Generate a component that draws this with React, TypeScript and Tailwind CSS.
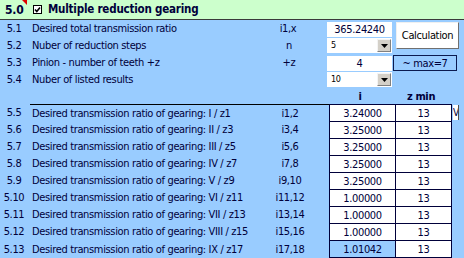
import React from "react";

const F = { fontFamily: '"DejaVu Sans Condensed", "DejaVu Sans", "Liberation Sans", sans-serif' };

function Dropdown({ value }: { value: string }) {
  return (
    <div className="w-[65px] h-[15px] bg-white flex items-center">
      <div className="flex-1 pl-[4px] text-[9px] leading-none text-black">{value}</div>
      <div className="w-[14px] h-[13px] mr-[1px] bg-[#d4d0c8] border-t border-l border-[#f4f4f4] border-r border-b border-r-[#808080] border-b-[#808080] flex items-center justify-center">
        <svg width="7" height="4" viewBox="0 0 7 4">
          <path d="M0 0H7L3.5 4Z" fill="#000" />
        </svg>
      </div>
    </div>
  );
}

const rows = [
  ["5.5", "I / z1", "i1,2", "3.24000"],
  ["5.6", "II / z3", "i3,4", "3.25000"],
  ["5.7", "III / z5", "i5,6", "3.25000"],
  ["5.8", "IV / z7", "i7,8", "3.25000"],
  ["5.9", "V / z9", "i9,10", "3.25000"],
  ["5.10", "VI / z11", "i11,12", "1.00000"],
  ["5.11", "VII / z13", "i13,14", "1.00000"],
  ["5.12", "VIII / z15", "i15,16", "1.00000"],
  ["5.13", "IX / z17", "i17,18", "1.01042"],
];

export default function App() {
  return (
    <div style={F} className="w-[464px] h-[258px] bg-[#99ccff] overflow-hidden text-[11px] tracking-[-0.35px] text-[#00003a] leading-none">
      {/* header */}
      <div className="h-[20px] bg-[#ccffcc] border-b border-[#3a3a3a] flex items-center">
        <div className="w-[28px] h-full relative flex items-center pl-[5px] font-bold text-[12px] tracking-[-0.2px]">
          5.0
          <div className="absolute top-0 right-[1px] w-0 h-0 border-l-[5px] border-l-transparent border-t-[5px] border-t-[#e00000]" />
        </div>
        <div className="w-[20px] flex items-center pl-[5px]">
          <svg width="9" height="9" viewBox="0 0 9 9">
            <rect x="0.5" y="0.5" width="8" height="8" fill="#fff" stroke="#000" />
            <path d="M2 4.5L3.8 6.5L7 2.5" stroke="#000" strokeWidth="1.6" fill="none" />
          </svg>
        </div>
        <div className="font-bold text-[11.5px] tracking-[-0.2px]">Multiple reduction gearing</div>
      </div>

      {/* top section */}
      <div className="grid grid-cols-[28px_227px_72px_66px_71px] grid-rows-[17px_17px_17px_17px]">
        <div className="flex items-center justify-center">5.1</div>
        <div className="flex items-center pl-[4px]">Desired total transmission ratio</div>
        <div className="flex items-center justify-center pr-[6px]">i1,x</div>
        <div className="flex items-center">
          <div className="w-[65px] h-[15px] mt-[1px] bg-white flex items-center justify-center">365.24240</div>
        </div>
        <div className="row-span-2 flex items-start pt-[2px] pl-[3px]">
          <div className="w-[63px] h-[27px] bg-white border border-t-[#f0f0f0] border-l-[#f0f0f0] border-r-[#707070] border-b-[#707070] flex items-center justify-center text-black">
            Calculation
          </div>
        </div>

        <div className="flex items-center justify-center">5.2</div>
        <div className="flex items-center pl-[4px]">Nuber of reduction steps</div>
        <div className="flex items-center justify-center pr-[4px]">n</div>
        <div className="flex items-center">
          <Dropdown value="5" />
        </div>

        <div className="flex items-center justify-center">5.3</div>
        <div className="flex items-center pl-[4px]">Pinion - number of teeth +z</div>
        <div className="flex items-center justify-center pr-[4px]">+z</div>
        <div className="flex items-center">
          <div className="w-[65px] h-[15px] mt-[1px] bg-white flex items-center justify-center">4</div>
        </div>
        <div className="flex items-center">
          <div className="w-[64px] h-[16px] mt-[1px] border border-[#0a1a50] flex items-center justify-center">~ max=7</div>
        </div>

        <div className="flex items-center justify-center">5.4</div>
        <div className="flex items-center pl-[4px]">Nuber of listed results</div>
        <div />
        <div className="flex items-center">
          <Dropdown value="10" />
        </div>
        <div />
      </div>

      {/* table header */}
      <div className="h-[16px] flex items-end">
        <div className="w-[327px]" />
        <div className="w-[66px] text-center font-bold pb-[2px]">i</div>
        <div className="w-[56px] text-center font-bold pb-[2px]">z min</div>
      </div>

      {/* table rows */}
      {rows.map((r, k) => {
        const last = k === rows.length - 1;
        return (
          <div key={r[0]} className={`flex ${last ? "h-[18px]" : "h-[17px]"}`}>
            <div className="w-[28px] flex items-center justify-center">{r[0]}</div>
            <div className={`w-[299px] ml-[2px] flex items-center ${k === 0 ? "border-t border-black" : ""}`}>
              <div className="w-[225px] pl-[2px] whitespace-nowrap">Desired transmission ratio of gearing: {r[1]}</div>
              <div className="w-[70px] text-center whitespace-nowrap">{r[2]}</div>
            </div>
            <div className={`w-[66px] border-l border-t border-[#00003a] ${last ? "border-b bg-[#99ccff]" : "bg-white"} flex items-center justify-center`}>
              {r[3]}
            </div>
            <div className={`w-[57px] border-l border-r border-t border-[#00003a] ${last ? "border-b" : ""} bg-white flex items-center justify-center`}>
              13
            </div>
            {k === 0 && (
              <div className="w-[6px] h-[15px] mt-[1px] ml-[1px] bg-white border-r border-[#505050] overflow-hidden text-[10px] flex items-center">
                V
              </div>
            )}
          </div>
        );
      })}
    </div>
  );
}
